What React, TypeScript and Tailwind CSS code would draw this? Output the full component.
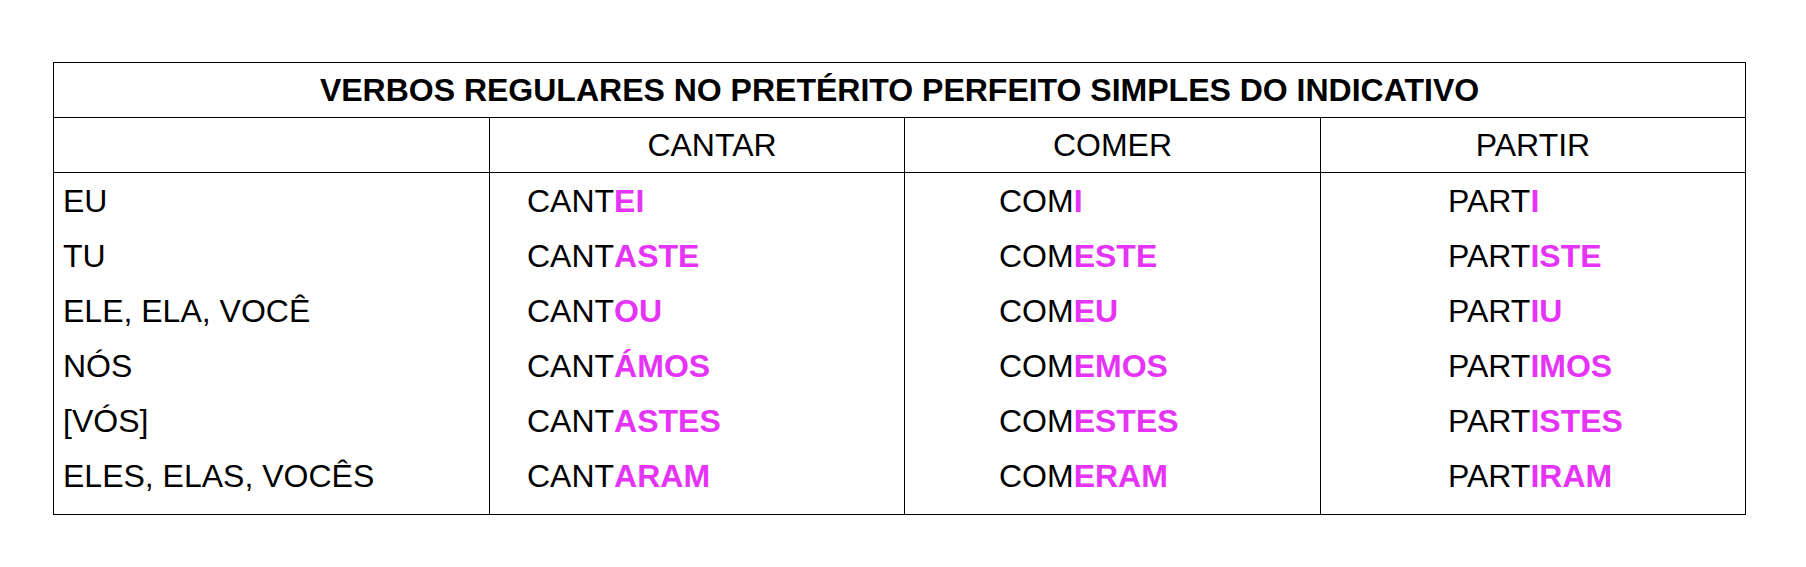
import React from 'react';

type Verb = { stem: string; endings: string[]; pad: string };

const pronouns = ['EU', 'TU', 'ELE, ELA, VOCÊ', 'NÓS', '[VÓS]', 'ELES, ELAS, VOCÊS'];

const verbs: Verb[] = [
  { stem: 'CANT', endings: ['EI', 'ASTE', 'OU', 'ÁMOS', 'ASTES', 'ARAM'], pad: 'pl-[37px]' },
  { stem: 'COM', endings: ['I', 'ESTE', 'EU', 'EMOS', 'ESTES', 'ERAM'], pad: 'pl-[94px]' },
  { stem: 'PART', endings: ['I', 'ISTE', 'IU', 'IMOS', 'ISTES', 'IRAM'], pad: 'pl-[127px]' },
];

export default function App() {
  return (
    <div className="min-h-[567px] bg-white pt-[62px] pl-[53px] font-['Liberation_Sans',Arial,sans-serif] text-[32px] text-black">
      <table className="w-[1692px] table-fixed border-collapse border border-black">
        <colgroup>
          <col className="w-[436px]" />
          <col className="w-[415px]" />
          <col className="w-[416px]" />
          <col className="w-[425px]" />
        </colgroup>
        <thead>
          <tr>
            <th colSpan={4} className="border border-black p-0 text-center font-bold leading-[54px]">
              VERBOS REGULARES NO PRETÉRITO PERFEITO SIMPLES DO INDICATIVO
            </th>
          </tr>
          <tr>
            <th className="border border-black p-0 font-normal leading-[54px]"></th>
            <th className="border border-black p-0 pl-[30px] text-center font-normal leading-[54px]">CANTAR</th>
            <th className="border border-black p-0 text-center font-normal leading-[54px]">COMER</th>
            <th className="border border-black p-0 text-center font-normal leading-[54px]">PARTIR</th>
          </tr>
        </thead>
        <tbody>
          <tr>
            <td className="border border-black p-0 pt-[1px] pb-[10px] pl-[9px] align-top">
              {pronouns.map((p) => (
                <div key={p} className="leading-[55px]">{p}</div>
              ))}
            </td>
            {verbs.map((v) => (
              <td key={v.stem} className={`border border-black p-0 pt-[1px] pb-[10px] align-top ${v.pad}`}>
                {v.endings.map((e) => (
                  <div key={e} className="leading-[55px]">
                    {v.stem}
                    <span className="font-bold text-[#e633f8]">{e}</span>
                  </div>
                ))}
              </td>
            ))}
          </tr>
        </tbody>
      </table>
    </div>
  );
}
